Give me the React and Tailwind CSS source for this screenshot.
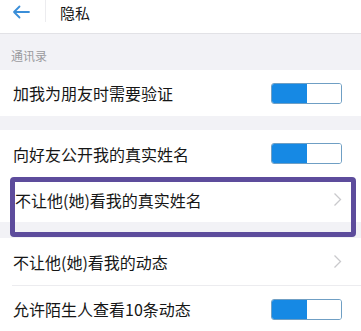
import React from "react";

function Toggle() {
  return (
    <div className="flex h-[21px] w-[71px] overflow-hidden rounded-[3px] border border-[#6f9fc4]">
      <div className="w-[35px] bg-[#1689e4]" />
      <div className="flex-1 bg-white" />
    </div>
  );
}

function Chevron() {
  return (
    <svg width="9" height="15" viewBox="0 0 9 15" className="mr-[19px]">
      <path d="M1.5 1.5 L7.5 7.5 L1.5 13.5" fill="none" stroke="#c9c9cc" strokeWidth="1.3" />
    </svg>
  );
}

export default function App() {
  return (
    <div
      className="w-[361px] h-[331px] overflow-hidden bg-[#f2f2f6] text-[#161616]"
      style={{ fontFamily: '"Noto Sans CJK SC", "Noto Sans", sans-serif' }}
    >
      {/* header */}
      <div className="flex h-[34px] items-start border-b border-[#e2e2e6] bg-white">
        <div className="flex h-[24px] w-[45px] items-center pl-[12px]">
          <svg width="18" height="14" viewBox="0 0 18 14">
            <path d="M17 7 H2 M7.5 1.5 L2 7 L7.5 12.5" fill="none" stroke="#3a8ed8" strokeWidth="1.8" strokeLinecap="round" strokeLinejoin="round" />
          </svg>
        </div>
        <div className="h-[22px] w-px bg-[#ececef]" />
        <div className="pl-[14px] pt-[3px] text-[15px] leading-[20px]">隐私</div>
      </div>

      {/* section label */}
      <div className="flex h-[36px] items-end pb-[7px] pl-[11px] text-[12px] leading-[14px] text-[#9a9a9e]">
        通讯录
      </div>

      {/* row 1 */}
      <div className="flex h-[46px] items-center justify-between bg-white pl-[13px] pr-[19px]">
        <span className="text-[16px]">加我为朋友时需要验证</span>
        <Toggle />
      </div>

      <div className="h-[14px]" />

      {/* row 2 */}
      <div className="flex h-[47px] items-center justify-between bg-white pl-[13px] pr-[19px]">
        <span className="text-[16px]">向好友公开我的真实姓名</span>
        <Toggle />
      </div>

      {/* row 3 with annotation box */}
      <div className="relative">
        <div className="flex h-[45px] items-center justify-between bg-white pl-[15px]">
          <span className="text-[16px]">不让他(她)看我的真实姓名</span>
          <Chevron />
        </div>
        <div className="h-[16px]" />
        <div className="absolute left-[10px] top-0 h-[60px] w-[346px] rounded-[4px] border-[5px] border-[#5d4c9c]" />
      </div>

      {/* row 4 */}
      <div className="flex h-[47px] items-center justify-between bg-white pl-[13px]">
        <span className="text-[16px]">不让他(她)看我的动态</span>
        <Chevron />
      </div>
      <div className="bg-white pl-[12px]">
        <div className="h-px bg-[#ececef]" />
      </div>

      {/* row 5 */}
      <div className="flex h-[46px] items-center justify-between bg-white pl-[13px] pr-[19px]">
        <span className="text-[16px]">允许陌生人查看10条动态</span>
        <Toggle />
      </div>
    </div>
  );
}
